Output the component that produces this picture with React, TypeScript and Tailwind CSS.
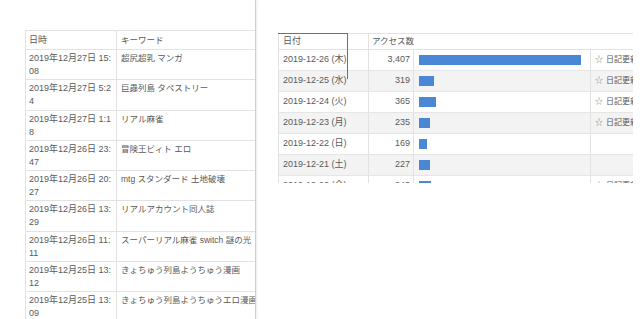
import React from 'react';

const font = { fontFamily: '"Liberation Sans", "Noto Sans CJK JP", sans-serif' };

const searches = [
  { a: '2019年12月27日 15:', b: '08', kw: '超尻超乳 マンガ' },
  { a: '2019年12月27日 5:2', b: '4', kw: '巨蟲列島 タペストリー' },
  { a: '2019年12月27日 1:1', b: '8', kw: 'リアル麻雀' },
  { a: '2019年12月26日 23:', b: '47', kw: '冒険王ビィト エロ' },
  { a: '2019年12月26日 20:', b: '27', kw: 'mtg スタンダード 土地破壊' },
  { a: '2019年12月26日 13:', b: '29', kw: 'リアルアカウント同人誌' },
  { a: '2019年12月26日 11:', b: '11', kw: 'スーパーリアル麻雀 switch 謎の光' },
  { a: '2019年12月25日 13:', b: '12', kw: 'きょちゅう列島ようちゅう漫画' },
  { a: '2019年12月25日 13:', b: '09', kw: 'きょちゅう列島ようちゅうエロ漫画' },
];

const access = [
  { d: '2019-12-26 (木)', n: 3407, note: true },
  { d: '2019-12-25 (水)', n: 319, note: true },
  { d: '2019-12-24 (火)', n: 365, note: true },
  { d: '2019-12-23 (月)', n: 235, note: true },
  { d: '2019-12-22 (日)', n: 169, note: false },
  { d: '2019-12-21 (土)', n: 227, note: false },
  { d: '2019-12-20 (金)', n: 243, note: true },
];

const SearchTable: React.FC = () => (
  <div className="w-[240px] border-l border-t border-[#e2e2e2] text-[9px] text-[#5a5a5a]">
    <div className="flex h-[19px] items-center border-b border-[#e2e2e2]">
      <div className="flex h-full w-[91px] items-center border-r border-[#e2e2e2] pl-[3px] pt-[1px]">日時</div>
      <div className="pl-[4px] pt-[1px] text-[8.5px]">キーワード</div>
    </div>
    {searches.map((r, i) => (
      <div key={i} className="flex h-[30.3px] border-b border-[#e2e2e2] leading-[13px]">
        <div className="w-[91px] shrink-0 whitespace-nowrap border-r border-[#e2e2e2] pl-[3px] pt-[2px]">
          {r.a}
          <br />
          {r.b}
        </div>
        <div className="whitespace-nowrap pl-[4px] pt-[2px] text-[8.5px]">{r.kw}</div>
      </div>
    ))}
  </div>
);

const AccessTable: React.FC = () => {
  const max = 3407;
  return (
    <div className="relative h-[150px] w-[355px] overflow-hidden">
      <div className="w-[365px] border-l border-t border-[#e2e2e2] text-[9px] text-[#5a5a5a]">
        <div className="flex h-[16px] items-center border-b border-[#e2e2e2]">
          <div className="flex h-full w-[90px] items-center border-r border-[#e2e2e2] pl-[4px]">日付</div>
          <div className="pl-[3px] text-[8.5px]">アクセス数</div>
        </div>
        {access.map((r, i) => (
          <div
            key={i}
            className={`flex h-[21px] items-center border-b border-[#e6e6e6] ${i % 2 === 1 ? 'bg-[#f3f3f3]' : 'bg-white'}`}
          >
            <div className="flex h-full w-[90px] shrink-0 items-center border-r border-[#e2e2e2] pl-[4px] whitespace-nowrap">
              {r.d}
            </div>
            <div className="flex h-full w-[45px] shrink-0 items-center justify-end border-r border-[#e2e2e2] pr-[3px]">
              {r.n.toLocaleString('en-US')}
            </div>
            <div className="flex h-full w-[177px] shrink-0 items-center border-r border-[#e2e2e2] pl-[5px]">
              <div className="h-[10px] bg-[#4a87d4]" style={{ width: `${Math.round((r.n / max) * 162)}px` }} />
            </div>
            <div className="flex h-full items-center whitespace-nowrap pl-[4px]">
              {r.note && (
                <>
                  <span className="mr-[3px] text-[8px] text-[#888]">☆</span>
                  <span className="text-[8px]">日記更新</span>
                </>
              )}
            </div>
          </div>
        ))}
      </div>
      <div className="absolute left-0 top-0 h-[46px] w-[70px] border-r border-t border-[#707070]" />
    </div>
  );
};

export default function App() {
  return (
    <div className="flex h-[319px] w-[640px] overflow-hidden bg-white" style={font}>
      <div className="h-full w-[256px] shrink-0 overflow-hidden border-r border-[#cfcfcf] pl-[25px] pt-[30px] shadow-[1px_0_2px_rgba(0,0,0,0.08)]">
        <SearchTable />
      </div>
      <div className="flex-1 pl-[22px] pt-[33px]">
        <AccessTable />
      </div>
    </div>
  );
}
